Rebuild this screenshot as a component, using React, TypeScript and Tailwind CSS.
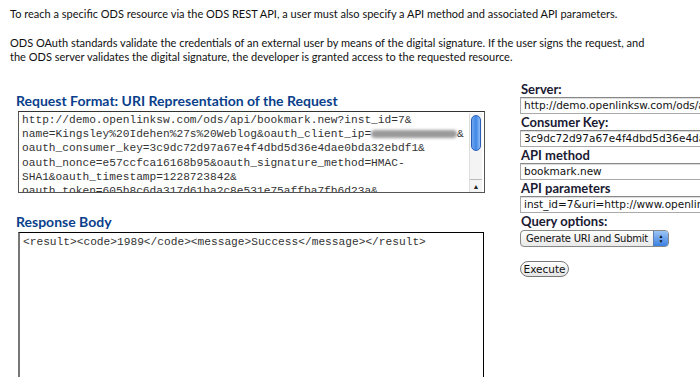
import React from 'react'

const requestLines = [
  'http://demo.openlinksw.com/ods/api/bookmark.new?inst_id=7&',
  'name=Kingsley%20Idehen%27s%20Weblog&oauth_client_ip=',
  'oauth_consumer_key=3c9dc72d97a67e4f4dbd5d36e4dae0bda32ebdf1&',
  'oauth_nonce=e57ccfca16168b95&oauth_signature_method=HMAC-',
  'SHA1&oauth_timestamp=1228723842&',
  'oauth_token=605b8c6da317d61ba2c8e531e75affba7fb6d23a&',
]

const fields = [
  { label: 'Server:', value: 'http://demo.openlinksw.com/ods/api/' },
  { label: 'Consumer Key:', value: '3c9dc72d97a67e4f4dbd5d36e4dae0bda32ebdf1' },
  { label: 'API method', value: 'bookmark.new' },
  { label: 'API parameters', value: 'inst_id=7&uri=http://www.openlinksw.com' },
]

function Scrollbar() {
  return (
    <div className="absolute right-[2px] top-[1px] bottom-0 w-[13px] flex flex-col bg-[#f4f4f4] border-l border-[#ddd]">
      <div className="mt-[2px] mx-auto w-[10px] h-[36px] rounded-full border border-[#2a5fb5] bg-gradient-to-r from-[#6fa7ee] via-[#3d86e6] to-[#8cbcf5]" />
      <div className="flex-1" />
      <div className="h-[13px] border-t border-[#bbb] flex items-center justify-center text-[7px] text-[#222]">▲</div>
    </div>
  )
}

export default function App() {
  return (
    <div className="w-[700px] h-[377px] overflow-hidden bg-white" style={{ fontFamily: 'Lato, "Open Sans", sans-serif' }}>
      <div className="pl-[10px] pt-[7px] text-[11px] leading-[14px] text-[#111] whitespace-nowrap">
        <p>To reach a specific ODS resource via the ODS REST API, a user must also specify a API method and associated API parameters.</p>
        <p className="mt-[15px]">
          ODS OAuth standards validate the credentials of an external user by means of the digital signature. If the user signs the request, and
          <br />
          the ODS server validates the digital signature, the developer is granted access to the requested resource.
        </p>
      </div>

      <div className="flex mt-[18px]">
        <div className="ml-[16px] w-[470px] pt-[11px]">
          <h2 className="text-[14px] font-bold leading-[16px] text-[#0a3f8c]">Request Format: URI Representation of the Request</h2>
          <div className="relative ml-[2px] mt-[2px] w-[467px] h-[82px] border border-[#555] border-t-[#333] overflow-hidden">
            <div className="pl-[3px] pt-[1px] text-[11.2px] leading-[14.2px] text-[#333] whitespace-pre" style={{ fontFamily: '"Liberation Mono", monospace' }}>
              {requestLines.map((line, i) => (
                <div key={i}>
                  {line}
                  {i === 1 && (
                    <>
                      <span className="inline-block align-middle w-[86px] h-[8px] rounded-full bg-[#9a9a9a] blur-[1.5px]" />
                      &amp;
                    </>
                  )}
                </div>
              ))}
            </div>
            <Scrollbar />
          </div>

          <h2 className="mt-[21px] text-[14px] font-bold leading-[16px] text-[#0a3f8c]">Response Body</h2>
          <div className="ml-[2px] mt-[2px] w-[466px] h-[200px] border border-black border-l-2 border-l-[#777]">
            <div className="pl-[3px] pt-[2px] text-[11.2px] leading-[14px] text-[#333]" style={{ fontFamily: '"Liberation Mono", monospace' }}>
              {'<result><code>1989</code><message>Success</message></result>'}
            </div>
          </div>
        </div>

        <div className="ml-[34px] flex-1 min-w-0">
          {fields.map((f) => (
            <div key={f.label}>
              <div className="text-[13px] font-bold leading-[14px] text-[#1a1a33] pl-[1px]">{f.label}</div>
              <div className="mt-[1px] mb-[1px] w-[220px] h-[17px] border border-[#aaa] border-t-[#888] shadow-[inset_0_1px_1px_rgba(0,0,0,0.15)] pl-[3px] text-[10.5px] leading-[15px] text-[#111] whitespace-nowrap overflow-hidden" style={{ fontFamily: '"DejaVu Sans", sans-serif' }}>
                {f.value}
              </div>
            </div>
          ))}
          <div className="text-[13px] font-bold leading-[14px] text-[#1a1a33] pl-[1px]">Query options:</div>
          <div className="mt-[2px] flex w-[149px] h-[17px] rounded-[4px] border border-[#888] bg-gradient-to-b from-white to-[#e8e8e8] overflow-hidden">
            <div className="flex-1 pl-[5px] text-[10px] tracking-[-0.25px] leading-[15px] text-[#111] whitespace-nowrap" style={{ fontFamily: '"DejaVu Sans", sans-serif' }}>Generate URI and Submit</div>
            <div className="w-[15px] shrink-0 border-l border-[#5a7fb5] bg-gradient-to-b from-[#9cc4f5] to-[#3a80e0] flex flex-col items-center justify-center text-[5px] leading-[5px] text-[#111]">
              <span>▲</span>
              <span>▼</span>
            </div>
          </div>
          <button className="mt-[14px] w-[49px] h-[16px] p-0 rounded-full border border-[#777] bg-gradient-to-b from-white to-[#e4e4e4] text-[10.5px] leading-[14px] text-[#111]" style={{ fontFamily: '"DejaVu Sans", sans-serif' }}>
            Execute
          </button>
        </div>
      </div>
    </div>
  )
}
